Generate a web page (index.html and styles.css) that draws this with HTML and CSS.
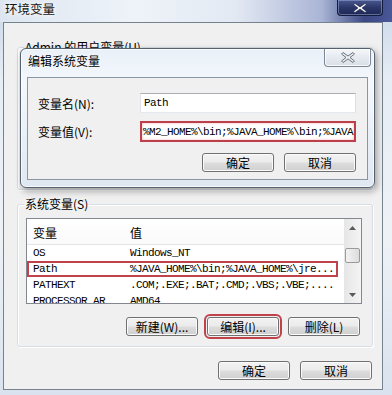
FILE: index.html
```html
<!DOCTYPE html>
<html lang="zh-CN">
<head>
    <meta charset="UTF-8">
    <title>环境变量</title>
    <link rel="stylesheet" href="styles.css">
</head>
<body>
    <div class="window">
        <div class="titlebar">
            <span class="title">环境变量</span>
            <button class="close close-dark">
                <svg width="14" height="10" viewBox="0 0 14 10"><path d="M2 0.5 L7 4 L12 0.5 L13.5 1.5 L9 5 L13.5 8.5 L12 9.5 L7 6 L2 9.5 L0.5 8.5 L5 5 L0.5 1.5 Z" fill="#fff" stroke="#1a2148" stroke-width="0.6"/></svg>
            </button>
        </div>
        <div class="client">
            <fieldset class="group user-group">
                <legend>Admin 的用户变量(U)</legend>
            </fieldset>
            <fieldset class="group">
                <legend>系统变量(S)</legend>
                <div class="listbox">
                    <div class="list-main">
                        <div class="list-head">
                            <span class="col-name">变量</span>
                            <span class="col-value">值</span>
                        </div>
                        <div class="row">
                            <span class="col-name mono">OS</span>
                            <span class="col-value mono">Windows_NT</span>
                        </div>
                        <div class="row marked">
                            <span class="col-name mono">Path</span>
                            <span class="col-value mono">%JAVA_HOME%\bin;%JAVA_HOME%\jre...</span>
                        </div>
                        <div class="row">
                            <span class="col-name mono">PATHEXT</span>
                            <span class="col-value mono">.COM;.EXE;.BAT;.CMD;.VBS;.VBE;....</span>
                        </div>
                        <div class="row">
                            <span class="col-name mono">PROCESSOR_AR</span>
                            <span class="col-value mono">AMD64</span>
                        </div>
                    </div>
                    <div class="scrollbar">
                        <div class="sb-arrow">
                            <svg width="7" height="4" viewBox="0 0 7 4"><path d="M0 4 L3.5 0 L7 4 Z" fill="#5a5a5a"/></svg>
                        </div>
                        <div class="sb-track">
                            <div class="sb-thumb"></div>
                        </div>
                        <div class="sb-arrow">
                            <svg width="7" height="4" viewBox="0 0 7 4"><path d="M0 0 L3.5 4 L7 0 Z" fill="#5a5a5a"/></svg>
                        </div>
                    </div>
                </div>
                <div class="btnrow group-buttons">
                    <button class="btn">新建(W)...</button>
                    <button class="btn marked-btn">编辑(I)...</button>
                    <button class="btn">删除(L)</button>
                </div>
            </fieldset>
            <div class="btnrow bottom-buttons">
                <button class="btn">确定</button>
                <button class="btn">取消</button>
            </div>
        </div>

        <div class="dialog">
            <div class="dialog-bar">
                <span class="dialog-title">编辑系统变量</span>
                <button class="close close-light">
                    <svg width="14" height="11" viewBox="0 0 14 11"><path d="M2 0.5 L7 4 L12 0.5 L13.5 2 L9 5.5 L13.5 9 L12 10.5 L7 7 L2 10.5 L0.5 9 L5 5.5 L0.5 2 Z" fill="#e9ecf0" stroke="#4b5563" stroke-width="0.8"/></svg>
                </button>
            </div>
            <div class="dialog-client">
                <div class="field">
                    <label>变量名(N):</label>
                    <div class="textbox mono">Path</div>
                </div>
                <div class="field">
                    <label>变量值(V):</label>
                    <div class="textbox mono marked-box">%M2_HOME%\bin;%JAVA_HOME%\bin;%JAVA</div>
                </div>
                <div class="btnrow dialog-buttons">
                    <button class="btn">确定</button>
                    <button class="btn">取消</button>
                </div>
            </div>
        </div>
    </div>
</body>
</html>
```

FILE: styles.css
```css
* {
    box-sizing: border-box;
}

body {
    margin: 0;
    width: 392px;
    height: 395px;
    overflow: hidden;
    font-family: "Noto Sans CJK SC", "Noto Sans", sans-serif;
    font-size: 12px;
    color: #000;
}

.mono {
    font-family: "Liberation Mono", "DejaVu Sans Mono", monospace;
    font-size: 11px;
    letter-spacing: -0.6px;
}

.window {
    position: relative;
    width: 392px;
    height: 395px;
    display: flex;
    flex-direction: column;
    padding: 0 9px 5px 3px;
    background:
        linear-gradient(to right, #dde6f0 0%, #eef3f9 35%, #e3e9f3 60%, #aab5d6 82%, #3c4884 93%, #4a5798 100%) 0 0 / 100% 22px no-repeat,
        linear-gradient(to bottom, #c9d6e8 0%, #e6edf5 20%, #eef2f7 60%, #d9e2ee 100%);
}

.titlebar {
    height: 22px;
    display: flex;
    justify-content: space-between;
    align-items: flex-start;
}

.title {
    margin: 2px 0 0 2px;
    line-height: 14px;
    font-size: 12.5px;
    color: #141414;
    text-shadow: 0 0 4px #fff, 0 0 7px #fff;
}

.close {
    display: flex;
    align-items: center;
    justify-content: center;
    padding: 0;
    border-radius: 0 0 4px 4px;
}

.close-dark {
    width: 46px;
    height: 16px;
    border: 1px solid #141b3c;
    border-top: none;
    background: linear-gradient(#4a5890 0%, #2c3769 50%, #1e2858 100%);
    box-shadow: inset 0 0 0 1px rgba(160, 175, 220, 0.5);
}

.client {
    flex: 1;
    display: flex;
    flex-direction: column;
    background: #f0f0f0;
    border: 1px solid #77828f;
    padding: 17px 9px 0 13px;
}

.group {
    margin: 0;
    padding: 7px 10px 10px 8px;
    border: 1px solid #d5dfe5;
    border-radius: 3px;
    box-shadow: inset 1px 1px 0 #fff, 1px 1px 0 #fff;
}

.group legend {
    margin-left: -2px;
    padding: 0 1px;
    line-height: 14px;
}

.user-group {
    height: 150px;
    margin-bottom: 7px;
}

.listbox {
    display: flex;
    height: 86px;
    background: #fff;
    border: 1px solid #828790;
}

.list-main {
    flex: 1;
    overflow: hidden;
}

.list-head {
    display: flex;
    align-items: center;
    height: 26px;
    padding-top: 2px;
    border-bottom: 1px solid #e5e5e5;
    background: linear-gradient(#fff, #fafafa);
}

.row {
    display: flex;
    align-items: center;
    height: 16px;
}

.col-name {
    width: 103px;
    padding-left: 6px;
    white-space: nowrap;
}

.col-value {
    white-space: nowrap;
}

.row.marked {
    width: 311px;
    outline: 2px solid #c0434c;
    outline-offset: -2px;
}

.scrollbar {
    width: 17px;
    display: flex;
    flex-direction: column;
    background: linear-gradient(to right, #e6e6e6, #f4f4f4);
}

.sb-arrow {
    height: 17px;
    display: flex;
    align-items: center;
    justify-content: center;
}

.sb-track {
    flex: 1;
    padding-top: 12px;
}

.sb-thumb {
    height: 15px;
    margin: 0 1px;
    border: 1px solid #9a9a9a;
    border-radius: 2px;
    background: linear-gradient(to right, #f3f3f3, #dcdcdc);
}

.btnrow {
    display: flex;
    justify-content: flex-end;
}

.group-buttons {
    margin-top: 13px;
    margin-right: 2px;
    gap: 9px;
}

.bottom-buttons {
    margin-top: 14px;
    margin-right: 1px;
    gap: 10px;
}

.btn {
    width: 72px;
    height: 19px;
    padding: 0;
    border: 1px solid #707070;
    border-radius: 3px;
    background: linear-gradient(#f2f2f2 0%, #ebebeb 48%, #dddddd 52%, #cfcfcf 100%);
    box-shadow: inset 0 0 0 1px #fbfbfb;
    font-family: inherit;
    font-size: 12px;
    line-height: 16px;
    color: #000;
}

.marked-btn {
    outline: 2px solid #c0434c;
    outline-offset: 1px;
}

.dialog {
    position: absolute;
    left: 20px;
    top: 48px;
    width: 355px;
    height: 140px;
    display: flex;
    flex-direction: column;
    padding: 0 6px 7px 6px;
    border: 1px solid #56616f;
    border-radius: 6px;
    background: linear-gradient(#e9f0f8 0%, #f4f8fc 25%, #dfe7f1 100%);
    box-shadow: 2px 3px 7px rgba(0, 0, 0, 0.35), inset 0 0 0 1px rgba(255, 255, 255, 0.7);
}

.dialog-bar {
    height: 28px;
    display: flex;
    justify-content: space-between;
    align-items: flex-start;
}

.dialog-title {
    margin: 5px 0 0 1px;
    line-height: 14px;
    text-shadow: 0 0 4px #fff;
}

.close-light {
    width: 47px;
    height: 18px;
    margin-right: -3px;
    border: 1px solid #7d8794;
    border-top: none;
    background: linear-gradient(#f4f6f9 0%, #e6eaf0 50%, #d9dfe7 100%);
    box-shadow: inset 0 0 0 1px rgba(255, 255, 255, 0.8);
}

.dialog-client {
    flex: 1;
    display: flex;
    flex-direction: column;
    background: #f0f0f0;
    border: 1px solid #8b96a4;
    padding: 15px 11px 0 10px;
}

.field {
    display: flex;
    align-items: center;
    height: 20px;
}

.field + .field {
    margin-top: 8px;
    height: 21px;
}

.field label {
    width: 102px;
}

.textbox {
    width: 216px;
    height: 100%;
    display: flex;
    align-items: center;
    padding-left: 3px;
    background: #fff;
    border: 1px solid #abadb3;
    border-left-color: #e2e3ea;
    border-right-color: #dbdfe6;
    border-bottom-color: #e3e9ef;
    white-space: nowrap;
    overflow: hidden;
}

.marked-box {
    border: 2px solid #bd3f4a;
    box-shadow: inset 0 0 3px #f3b5b8;
    padding-left: 1px;
}

.dialog-buttons {
    margin-top: 11px;
    gap: 10px;
}
```
